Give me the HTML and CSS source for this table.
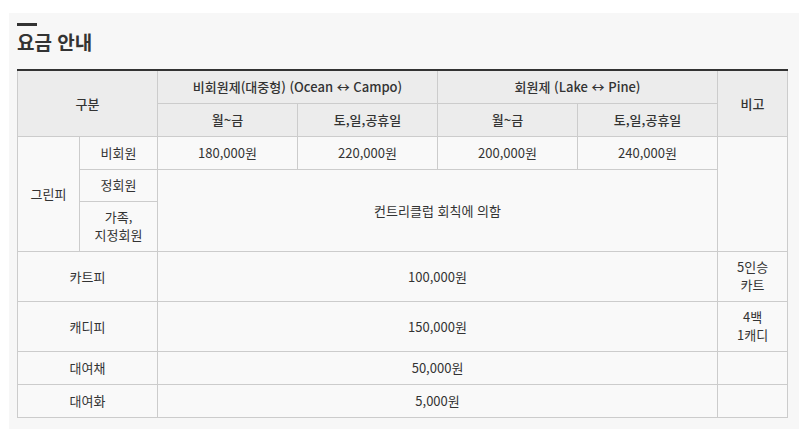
FILE: index.html
```html
<!DOCTYPE html>
<html lang="ko">
<head>
<meta charset="utf-8">
<link rel="stylesheet" href="styles.css">
</head>
<body>
<div class="page">
  <section class="panel">
    <div class="title-bar"></div>
    <h2 class="title">요금 안내</h2>
    <table class="fee">
      <colgroup>
        <col class="c1"><col class="c2"><col class="cd"><col class="cd"><col class="cd"><col class="cd"><col class="cn">
      </colgroup>
      <thead>
        <tr>
          <th colspan="2" rowspan="2">구분</th>
          <th colspan="2">비회원제(대중형) (Ocean ↔ Campo)</th>
          <th colspan="2">회원제 (Lake ↔ Pine)</th>
          <th rowspan="2">비고</th>
        </tr>
        <tr>
          <th>월~금</th>
          <th>토,일,공휴일</th>
          <th>월~금</th>
          <th>토,일,공휴일</th>
        </tr>
      </thead>
      <tbody>
        <tr>
          <td rowspan="3">그린피</td>
          <td>비회원</td>
          <td>180,000원</td>
          <td>220,000원</td>
          <td>200,000원</td>
          <td>240,000원</td>
          <td rowspan="3"></td>
        </tr>
        <tr>
          <td class="short">정회원</td>
          <td colspan="4" rowspan="2">컨트리클럽 회칙에 의함</td>
        </tr>
        <tr>
          <td class="two">가족,<br>지정회원</td>
        </tr>
        <tr>
          <td colspan="2">카트피</td>
          <td colspan="4">100,000원</td>
          <td class="two">5인승<br>카트</td>
        </tr>
        <tr>
          <td colspan="2">캐디피</td>
          <td colspan="4">150,000원</td>
          <td class="two">4백<br>1캐디</td>
        </tr>
        <tr>
          <td colspan="2">대여채</td>
          <td colspan="4">50,000원</td>
          <td></td>
        </tr>
        <tr>
          <td colspan="2">대여화</td>
          <td colspan="4">5,000원</td>
          <td></td>
        </tr>
      </tbody>
    </table>
  </section>
</div>
</body>
</html>
```
FILE: styles.css
```css
html, body {
  margin: 0;
  padding: 0;
  background: #ffffff;
}
body {
  font-family: "Noto Sans CJK KR", "Noto Sans", sans-serif;
  color: #333333;
}
.page {
  padding: 13px 12px 0 9px;
}
.panel {
  width: 790px;
  box-sizing: border-box;
  background: #f7f7f7;
  padding: 10px 12px 11px 8px;
}
.title-bar {
  width: 20px;
  height: 3px;
  background: #333333;
}
.title {
  margin: 2px 0 0 0;
  font-size: 19px;
  line-height: 28px;
  font-weight: 700;
  color: #333333;
  height: 41px;
}
.fee {
  width: 770px;
  table-layout: fixed;
  border-collapse: collapse;
  border-top: 2px solid #333333;
  font-size: 13px;
  line-height: 18px;
}
.c1 { width: 62px; }
.c2 { width: 78px; }
.cd { width: 140px; }
.cn { width: 70px; }
.fee th, .fee td {
  border: 1px solid #cccccc;
  padding: 7px 2px 7px;
  text-align: center;
  vertical-align: middle;
}
.fee td.two {
  padding: 6px 2px 7px;
}
.fee td.short {
  padding: 6px 2px 7px;
}
.fee thead tr:first-child th {
  border-top: none;
}
.fee th {
  background: #ececec;
  font-weight: 500;
  color: #333333;
}
.fee td {
  background: #f9f9f9;
  font-weight: 400;
  color: #333333;
}
```
